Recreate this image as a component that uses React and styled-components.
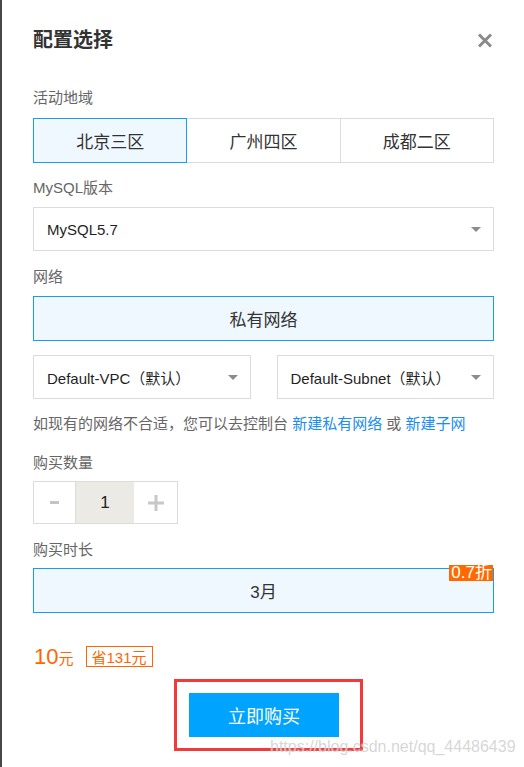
import styled, { createGlobalStyle } from "styled-components";

const GlobalStyle = createGlobalStyle`
  html, body {
    margin: 0;
    padding: 0;
    background: #fff;
  }
  body {
    font-family: "Liberation Sans", "Noto Sans CJK SC", Arial, sans-serif;
    color: #333;
  }
  * { box-sizing: border-box; }
`;

const regions = ["北京三区", "广州四区", "成都二区"];

export default function App() {
  return (
    <>
      <GlobalStyle />
      <Page>
        <Header>
          <Title>配置选择</Title>
          <CloseButton aria-label="关闭">
            <svg width="16" height="15" viewBox="0 0 16 15">
              <path d="M2 1.5 L14 13.5 M14 1.5 L2 13.5" stroke="#8a8a8a" strokeWidth="3" />
            </svg>
          </CloseButton>
        </Header>

        <Label $mt={35} $mb={10}>活动地域</Label>
        <Tabs>
          {regions.map((r, i) => (
            <Tab key={r} $active={i === 0}>{r}</Tab>
          ))}
        </Tabs>

        <Label $mt={15} $mb={9}>MySQL版本</Label>
        <Select>
          MySQL5.7
          <Arrow />
        </Select>

        <Label $mt={16} $mb={9}>网络</Label>
        <OptionBox>私有网络</OptionBox>

        <SelectRow>
          <Select>
            Default-VPC（默认）
            <Arrow />
          </Select>
          <Select>
            Default-Subnet（默认）
            <Arrow />
          </Select>
        </SelectRow>

        <Hint>
          如现有的网络不合适，您可以去控制台 <Link>新建私有网络</Link> 或 <Link>新建子网</Link>
        </Hint>

        <Label $mt={19} $mb={8}>购买数量</Label>
        <Stepper>
          <StepButton $w={41}>
            <svg width="9" height="3" viewBox="0 0 9 3">
              <rect width="9" height="3" fill="#c4c4c4" />
            </svg>
          </StepButton>
          <StepValue>1</StepValue>
          <StepButton $w={43}>
            <svg width="16" height="16" viewBox="0 0 16 16">
              <path d="M8 0 V16 M0 8 H16" stroke="#c8c8c8" strokeWidth="3" />
            </svg>
          </StepButton>
        </Stepper>

        <Label $mt={16} $mb={8}>购买时长</Label>
        <OptionBox>
          3月
          <Discount>0.7折</Discount>
        </OptionBox>

        <PriceRow>
          <Price>
            10<small>元</small>
          </Price>
          <Saving>省131元</Saving>
        </PriceRow>

        <Footer>
          <Highlight>
            <BuyButton>立即购买</BuyButton>
          </Highlight>
        </Footer>

        <Watermark>https://blog.csdn.net/qq_44486439</Watermark>
      </Page>
    </>
  );
}

// ==== Styled Components ====

const Page = styled.div`
  position: relative;
  min-height: 767px;
  border-left: 2px solid #474747;
  padding: 27px 30px 0 31px;
`;

const Header = styled.div`
  display: flex;
  align-items: center;
  justify-content: space-between;
  height: 26px;
`;

const Title = styled.h2`
  margin: 0;
  font-size: 20px;
  line-height: 26px;
  font-weight: 700;
  color: #333;
`;

const CloseButton = styled.span`
  display: flex;
  align-items: center;
  margin-right: 1px;
  cursor: pointer;
`;

const Label = styled.div`
  margin-top: ${({ $mt }) => $mt}px;
  margin-bottom: ${({ $mb }) => $mb}px;
  font-size: 15px;
  line-height: 20px;
  color: #666;
`;

const Tabs = styled.div`
  display: flex;
`;

const Tab = styled.div`
  position: relative;
  z-index: ${({ $active }) => ($active ? 1 : 0)};
  flex: 1;
  height: 45px;
  display: flex;
  align-items: center;
  justify-content: center;
  font-size: 17px;
  color: #333;
  border: 1px solid ${({ $active }) => ($active ? "#14a0ee" : "#dcdcdc")};
  background: ${({ $active }) => ($active ? "#f0f8ff" : "#fff")};
  cursor: pointer;

  & + & {
    margin-left: -1px;
  }
`;

const Select = styled.div`
  position: relative;
  height: 44px;
  display: flex;
  align-items: center;
  padding-left: 13px;
  font-size: 15px;
  color: #1f1f1f;
  border: 1px solid #dcdcdc;
  background: #fff;
  cursor: pointer;
`;

const Arrow = styled.span`
  position: absolute;
  right: 12px;
  top: 50%;
  margin-top: -2px;
  width: 0;
  height: 0;
  border-left: 5px solid transparent;
  border-right: 5px solid transparent;
  border-top: 5px solid #8c8c8c;
`;

const OptionBox = styled.div`
  position: relative;
  height: 45px;
  display: flex;
  align-items: center;
  justify-content: center;
  font-size: 17px;
  color: #333;
  border: 1px solid #14a0ee;
  background: #f0f8ff;
`;

const SelectRow = styled.div`
  display: grid;
  grid-template-columns: 1fr 1fr;
  gap: 26px;
  margin-top: 14px;
`;

const Hint = styled.p`
  margin: 15px 0 0;
  font-size: 15px;
  line-height: 20px;
  color: #666;
  white-space: nowrap;
`;

const Link = styled.a`
  color: #1a8df0;
  cursor: pointer;
`;

const Stepper = styled.div`
  display: inline-flex;
  height: 43px;
  border: 1px solid #dcdcdc;
`;

const StepButton = styled.span`
  width: ${({ $w }) => $w}px;
  display: flex;
  align-items: center;
  justify-content: center;
  background: #fff;
  cursor: pointer;

  & + & {
    border-left: 1px solid #dcdcdc;
  }
`;

const StepValue = styled.span`
  width: 59px;
  display: flex;
  align-items: center;
  justify-content: center;
  border-left: 1px solid #dcdcdc;
  background: #ebeae4;
  font-size: 17px;
  color: #222;
`;

const Discount = styled.span`
  position: absolute;
  top: -4px;
  right: 0;
  padding: 0 1px 0 2px;
  background: #ff6a00;
  color: #fff;
  font-size: 17px;
  line-height: 16px;
`;

const PriceRow = styled.div`
  display: flex;
  align-items: center;
  margin-top: 33px;
  height: 21px;
`;

const Price = styled.span`
  font-size: 22px;
  color: #ff6600;
  margin-left: 1px;

  small {
    font-size: 15px;
  }
`;

const Saving = styled.span`
  margin-left: 12px;
  height: 21px;
  padding: 0 5px;
  display: flex;
  align-items: center;
  border: 1px solid #ff6600;
  color: #ff6600;
  font-size: 15px;
`;

const Footer = styled.div`
  display: flex;
  justify-content: center;
  margin-top: 12px;
`;

const Highlight = styled.div`
  margin-left: 10px;
  padding: 11px 21px 11px 12px;
  border: 3px solid #f23a3a;
`;

const BuyButton = styled.button`
  width: 150px;
  height: 44px;
  border: none;
  background: #00a4ff;
  color: #fff;
  font-family: inherit;
  font-size: 18px;
  cursor: pointer;
`;

const Watermark = styled.span`
  position: absolute;
  left: 268px;
  top: 737px;
  font-size: 16px;
  line-height: 20px;
  color: rgba(180, 180, 180, 0.55);
  text-shadow: 0 0 1px rgba(255, 255, 255, 0.8);
  pointer-events: none;
  white-space: nowrap;
`;
